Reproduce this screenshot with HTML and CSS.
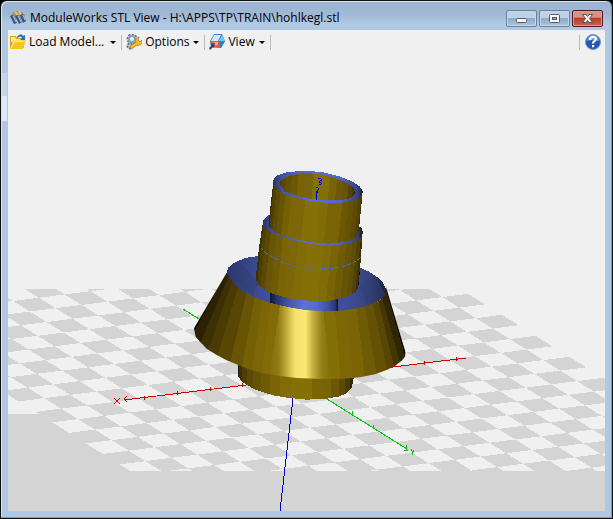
FILE: index.html
```html
<!DOCTYPE html>
<html lang="en">
<head>
<meta charset="utf-8">
<title>ModuleWorks STL View</title>
<link rel="stylesheet" href="styles.css">
</head>
<body>
<div class="window">
  <header class="titlebar">
    <svg class="app-icon" viewBox="0 0 16 16" aria-hidden="true">
      <path d="M1 5l3-3 4-1 4 1 3 3-2 4H3z" fill="#9c9468"/>
      <path d="M5 2l3 3M9 1l2 4" stroke="#dcc878" stroke-width="2"/>
      <path d="M0 6l3-1 4 8-3 1zM5 6l3-1 4 7-3 2zM10 5l3-1 3 7-3 2z" fill="#365787"/>
      <path d="M3 6l3 6M8 6l3 6M13 5l2 5" stroke="#b8cce5"/>
    </svg>
    <h1 class="title">ModuleWorks STL View - H:\APPS\TP\TRAIN\hohlkegl.stl</h1>
    <div class="caption-buttons">
      <button class="caption" aria-label="Minimize"><svg viewBox="0 0 31 17"><rect x="10.500" y="8.500" width="10" height="4" rx="1" fill="#f6f6f6" stroke="#545c6c"/></svg></button>
      <button class="caption" aria-label="Maximize"><svg viewBox="0 0 31 17"><rect x="10.500" y="4.500" width="10" height="8" rx="1" fill="#f6f6f6" stroke="#545c6c"/><rect x="13.500" y="7.500" width="4" height="2" fill="#87a9cd" stroke="#545c6c"/></svg></button>
      <button class="caption close" aria-label="Close"><svg viewBox="0 0 31 17"><path d="M10.500 4.500h3.500l1.500 2 1.500-2h3.500l-3 4 3 4h-3.500l-1.500-2-1.500 2h-3.500l3-4z" fill="#fafafa" stroke="#5a4c5c"/></svg></button>
    </div>
  </header>
  <main class="client">
    <nav class="toolbar" aria-label="Tools">
      <button class="tool load">
        <svg viewBox="0 0 16 16" aria-hidden="true"><path d="M0 2h6l1 2h7v10H0z" fill="#d9a11a"/><path d="M1 3h4l1 2h7v3H1z" fill="#ffe992"/><path d="M7 3c2-3 5-3 6-1l2-1v5h-5l2-2c-1-2-3-1-5 0z" fill="#2d6ab8"/><path d="M0 15L3 7l13-1-3 9z" fill="#f8c51d"/><path d="M1 14l3-6 11-1" fill="none" stroke="#fff0a0"/></svg>
        <span>Load Model...</span><i class="arrow"></i>
      </button>
      <span class="sep"></span>
      <button class="tool options">
        <svg viewBox="0 0 16 16" aria-hidden="true"><circle cx="6" cy="5" r="4" fill="none" stroke="#61758f" stroke-width="3" stroke-dasharray="2 1"/><circle cx="6" cy="5" r="3" fill="#edf3fa" stroke="#8ba2bd" stroke-width="2"/><circle cx="4" cy="12" r="2.500" fill="#c8d8eb" stroke="#61758f" stroke-width="2" stroke-dasharray="2 1"/><path d="M5 15l-1-3 6-4c-1-3 1-5 3-5l-1 3 2 2 2-2c1 4-2 6-5 5z" fill="#f5be24" stroke="#b97910" stroke-width=".8"/></svg>
        <span>Options</span><i class="arrow"></i>
      </button>
      <span class="sep"></span>
      <button class="tool view">
        <svg viewBox="0 0 16 16" aria-hidden="true"><path d="M5 0h8l3 7-4 7-10-1-1-6z" fill="#2f86cf"/><path d="M5 1h7l-3 6H2z" fill="#c8e9ff"/><path d="M13 1l3 6-6 0z" fill="#7cc3f5"/><path d="M10 7h6l-4 7z" fill="#2c7fc9"/><path d="M1 7h9l1 7-8-1z" fill="#e85639"/><path d="M4 8h5v3l-4 1z" fill="#ff9f87"/><path d="M0 14l3-3-2-1 5-1-1 5-1-1-3 3z" fill="#28407f"/></svg>
        <span>View</span><i class="arrow"></i>
      </button>
      <span class="sep"></span>
      <span class="spacer"></span>
      <span class="sep"></span>
      <button class="tool help" aria-label="Help">
        <svg viewBox="0 0 16 16" aria-hidden="true"><circle cx="8" cy="8" r="7.500" fill="#2757b6" stroke="#7898cb"/><path d="M2 7a6 6 0 0 1 12 0q-6-2-12 0" fill="#6f9be2"/><path d="M5 6c0-4 6-4 6-1 0 2-3 2-3 4.500" fill="none" stroke="#fff" stroke-width="2.200"/><rect x="7" y="11" width="2.200" height="2.200" fill="#fff"/></svg>
      </button>
    </nav>
    <svg class="viewport" viewBox="8 54 597 457" preserveAspectRatio="xMidYMid slice" role="img" aria-label="3D model on a checkered floor">
      <defs>
        <clipPath id="floor-clip"><rect x="8" y="289" width="597" height="182"/></clipPath>
        <clipPath id="cone-clip"><path d="M140 68L150 85 165 105 190 125 220 140 260 155 300 165 340 174 380 180 430 183 475 183 520 176 560 168 595 153 620 135 618 110 677 308 675 320 665 332 645 347 620 360 585 373 540 382 490 386 430 387 350 384 300 378 250 370 210 359 175 345 140 331 110 315 80 296 60 275 47 260 42 235z"/></clipPath>
        <linearGradient id="shine"><stop offset="0" stop-color="#836c07"/><stop offset=".16" stop-color="#927b15"/><stop offset=".3" stop-color="#c5ad3c"/><stop offset=".43" stop-color="#f7e16d"/><stop offset=".6" stop-color="#fce775"/><stop offset=".72" stop-color="#c8af3d"/><stop offset=".86" stop-color="#948017"/><stop offset="1" stop-color="#837008"/></linearGradient>
        <linearGradient id="neck"><stop offset="0" stop-color="#10162d"/><stop offset=".1" stop-color="#29356d"/><stop offset=".3" stop-color="#4658b0"/><stop offset=".5" stop-color="#5b70dc"/><stop offset=".68" stop-color="#556ad0"/><stop offset=".85" stop-color="#4051a2"/><stop offset=".96" stop-color="#29356d"/><stop offset="1" stop-color="#080b16"/></linearGradient>
        <linearGradient id="ring"><stop offset="0" stop-color="#293466"/><stop offset=".1" stop-color="#364381"/><stop offset=".25" stop-color="#404f9c"/><stop offset=".75" stop-color="#404e99"/><stop offset=".9" stop-color="#344178"/><stop offset="1" stop-color="#181f3c"/></linearGradient>
        <linearGradient id="rim"><stop offset="0" stop-color="#2a3466"/><stop offset=".1" stop-color="#4252a2"/><stop offset=".45" stop-color="#596edb"/><stop offset=".75" stop-color="#5365c8"/><stop offset=".95" stop-color="#35427d"/><stop offset="1" stop-color="#111630"/></linearGradient>
        <linearGradient id="tube" gradientUnits="userSpaceOnUse" x1="282" x2="564" y1="0" y2="0" gradientTransform="skewX(-6)"></linearGradient>
        <linearGradient id="sleeve" gradientUnits="userSpaceOnUse" x1="262" x2="576" y1="0" y2="0" gradientTransform="skewX(-6)"></linearGradient>
        <linearGradient id="bore" gradientUnits="userSpaceOnUse" x1="302" x2="536" y1="0" y2="0" gradientTransform="skewX(-6)"></linearGradient>
        <linearGradient id="foot" gradientUnits="userSpaceOnUse" x1="175" x2="521" y1="0" y2="0"></linearGradient>
      </defs>
      <g shape-rendering="crispEdges">
        <rect x="-400" y="-200" width="1400" height="1200" fill="#f0f0f0"/>
        <path d="M-400 414H40L137 471H592L605 457H1000V1000H-400z" fill="#d4d4d4"/>
        <g clip-path="url(#floor-clip)"><path id="board" fill="#f0f0f0"/><path id="tiles" fill="#d4d4d4"/></g>
        <path d="M124 400L466 358" stroke="#c80000"/>
        <path d="M114 398l6 6m0-6l-6 6M127 396l-3 3 3 3M144 396v4M177 391v4M210 387v4M242 383v4M424 361v4M456 357v4" stroke="#c80000" fill="none"/>
        <path d="M183 309L407 449" stroke="#00c800"/>
        <path d="M352 411v4M373 425v4M406 445v5m2 0h-4M411 449l1 2v4M413 450v2" stroke="#00c800" fill="none"/>
        <path d="M293 398L280 511" stroke="#0000c8"/>
        <g transform="translate(180 250) scale(.33333)">
          <path d="M175 340V380L185 394 200 405 225 418 250 427 285 437 320 443 380 449 440 446 475 440 495 432 515 415 521 385V340z" fill="url(#foot)"/>
          <path d="M140 70L145 53 158 41 175 32 200 23 235 18 400 0 540 53 565 64 590 80 610 100 620 120V138L560 172 475 188 360 183 220 146 160 112z" fill="url(#ring)"/>
          <path d="M140 68L175 32 235 95 220 140zM620 138L580 75 540 105 560 168z" fill="#303d72" opacity=".5"/>
          <g clip-path="url(#cone-clip)" id="cone"></g>
          <path d="M270 125V158L300 166 340 174 380 180 430 183H475V145z" fill="url(#neck)"/>
        </g>
        <g transform="translate(180 160) scale(.33333)">
          <path d="M250 180L237 262 227 359 235 374 250 387 280 402 330 416 400 423 450 422 500 410 525 397 535 382 540 330 543 290 548 215 542 202 267 175z" fill="url(#sleeve)"/>
          <path d="M267 164L253 179 249 190 252 200 264 211 280 221 315 234 360 246 415 255 455 257 500 252 530 242 545 230 548 215 544 203 535 198 525 236 480 245 400 245 290 218z" fill="url(#rim)"/>
          <path d="M242 264Q268 292 322 312T428 326Q511 324 543 291" fill="none" stroke="#5266cb" stroke-width="3" stroke-dasharray="9 5 16 7"/>
          <path d="M280 65L267 178V200L282 216 315 229 360 241 410 249 450 251 495 246 528 233 536 217 548 96z" fill="url(#tube)"/>
          <path d="M279 65L281 57 292 46 315 38 350 34 390 33 435 38 475 48 515 64 539 79 548 93 547 103 538 114 520 122 488 128 440 129 390 123 345 113 310 101 287 83z" fill="url(#rim)"/>
          <path d="M300 75L302 61 319 51 346 43 380 39 420 43 460 53 500 68 520 83 525 98 522 108 508 115 480 121 440 121 390 116 350 107 315 94z" fill="url(#bore)"/>
          <path d="M409 120V92M409 84h6v7h-3v8M415 57l5-2 5 5-8 6 7 3-2 5h-6" fill="none" stroke="#0000c8" stroke-width="3"/>
        </g>
      </g>
    </svg>
  </main>
</div>
<script src="scene.js"></script>
</body>
</html>
```
FILE: styles.css
```css
* { box-sizing: border-box; }
body { margin: 0; background: #000; font-family: "Open Sans", "Noto Sans", sans-serif; font-size: 12px; color: #000; }
button { padding: 0; border: 0; background: none; font: inherit; color: inherit; }
.window {
  display: flex; flex-direction: column; height: 100vh; padding: 0 7px 7px 7px;
  border: 1px solid #101010; border-radius: 7px 7px 0 0;
  background: linear-gradient(#c3d5ea, #c3d5ea) 0 72px / 6px 23px no-repeat,
    linear-gradient(#dce8f3, #dce8f3) 0 95px / 6px 25px no-repeat,
    linear-gradient(#9ab3d0, #a0b9d6 14px, #b1c8e2 22px, #b1c8e2);
  box-shadow: inset -1px -1px #30bfd0, inset 1px 1px #dae5f0;
}
.titlebar { display: flex; flex: 0 0 29px; align-items: center; padding: 5px 2px 0 2px; }
.app-icon { width: 16px; height: 16px; flex: none; margin-right: 4px; }
.title { flex: 1; margin: 0; font-size: 12px; line-height: 16px; font-weight: 400; white-space: nowrap; overflow: hidden; }
.caption-buttons { display: flex; gap: 2px; }
.caption {
  width: 31px; height: 17px; border: 1px solid #66809e; border-radius: 2px;
  background: linear-gradient(#bfd1e6 0 45%, #8fabc9 50%, #a9c4df);
  box-shadow: inset 0 0 0 1px #c7d8e9;
}
.caption svg { display: block; width: 31px; height: 17px; margin: -1px; }
.close { border-color: #521523; background: linear-gradient(#d69488 0 40%, #b83d28 50%, #ca654b); box-shadow: inset 0 0 0 1px #df9d8e; }
.client { display: flex; flex: 1; flex-direction: column; min-height: 0; background: #f0f0f0; }
.toolbar { display: flex; flex: 0 0 24px; align-items: center; padding: 0 4px 0 2px; }
.tool { display: flex; align-items: center; height: 24px; line-height: 16px; white-space: nowrap; }
.tool svg { width: 16px; height: 16px; margin-right: 3px; flex: none; }
.help .arrow, .help svg { margin: 0; }
.arrow { margin: 1px 5px 0 4px; border: 3px solid transparent; border-top-color: #000; border-bottom: 0; }
.load .arrow { margin-left: 6px; }
.sep { width: 1px; height: 15px; margin-right: 4px; background: #bcbcbc; }
.spacer { flex: 1; }
.help { margin-left: 1px; }
.viewport { display: block; flex: 1; width: 100%; min-height: 0; }
```
FILE: scene.js
```js
const NS = "http://www.w3.org/2000/svg";

// Floor: square cells projected along two axes.
const origin = [442.3, 297.1], u = [25.85, -3.28], v = [16.85, 10.5];
const project = (i, j) => [0, 1].map(k => (origin[k] + i * u[k] + j * v[k]).toFixed(2)).join(" ");
const quad = (i0, j0, i1, j1) =>
  `M${project(i0, j0)}L${project(i1, j0)}L${project(i1, j1)}L${project(i0, j1)}z`;
let cells = "";
for (let i = -19; i <= 0; i++)
  for (let j = -8; j < 26; j++)
    if ((i + j) % 2 === 0) cells += quad(i, j, i + 1, j + 1);
document.getElementById("tiles").setAttribute("d", cells);
document.getElementById("board").setAttribute("d", quad(-19, -8, 1, 26));

// Flat shaded facets of the cylinders.
const shades = {
  tube: ["#110d02", "#3b3003", "#4e4004", "#5c4a05", "#685405", "#746005", "#7c6606", "#7c6606", "#857008", "#857008", "#826c07", "#7a6506", "#7a6506", "#6c5705", "#665205", "#5c4a05", "#504104", "#3b3003", "#0a0801"],
  sleeve: ["#201903", "#3b3003", "#4e4004", "#5a4905", "#685405", "#705b05", "#7a6506", "#7c6606", "#826c07", "#857008", "#857008", "#806b06", "#786305", "#705b05", "#665305", "#5f4d05", "#504104", "#3b3003", "#0a0801"],
  bore: ["#2b2204", "#4b3d04", "#594704", "#645005", "#6c5705", "#786305", "#786305", "#847006", "#847006", "#786305", "#6c5705", "#685305", "#544304", "#443604", "#241c02"],
  foot: ["#241c02", "#3b3003", "#4c3e04", "#5b4905", "#665205", "#705b05", "#7a6506", "#826c07", "#857008", "#857008", "#7a6506", "#786305", "#6b5705", "#5d4b05", "#4a3b04", "#332903", "#110d02"]
};
for (const [id, colors] of Object.entries(shades)) {
  const gradient = document.getElementById(id);
  colors.forEach((color, n) => {
    // Facets near the silhouette are seen edge on and look narrower.
    for (const edge of [n, n + 1]) {
      const stop = document.createElementNS(NS, "stop");
      stop.setAttribute("offset", (1 - Math.cos(Math.PI * edge / colors.length)) / 2);
      stop.setAttribute("stop-color", color);
      gradient.append(stop);
    }
  });
}

// Cone facets: x,y at the top edge, x,y at the bottom edge, shade.
const facets = [
  [110, 50, 0, 250, "#0c0901"], [138, 68, 40, 250, "#2b2203"], [146, 80, 60, 280, "#3c3004"],
  [156, 95, 84, 302, "#4a3b04"], [175, 110, 112, 320, "#584605"], [200, 128, 150, 340, "#685405"],
  [225, 140, 185, 355, "#746005"], [248, 150, 215, 365, "#7c6606"], [272, 158, 245, 375, "#836c07"],
  [300, 165, 268, 380, "url(#shine)"], [430, 180, 450, 390, "#837008"], [465, 182, 482, 390, "#7d6705"],
  [500, 180, 520, 388, "#7a6406"], [530, 174, 555, 384, "#705b05"], [555, 168, 590, 375, "#645105"],
  [578, 160, 622, 362, "#574605"], [594, 150, 642, 350, "#453704"], [606, 142, 661, 340, "#302603"],
  [617, 115, 675, 318, "#0c0901"], [640, 100, 700, 320, "none"]
];
const cone = document.getElementById("cone");
for (let n = 0; n < facets.length - 1; n++) {
  const [ax, ay, bx, by, fill] = facets[n], [cx, cy, dx, dy] = facets[n + 1];
  const facet = document.createElementNS(NS, "polygon");
  // Extend past both rims; the clip path trims to the silhouette.
  const at = (x0, y0, x1, y1, y) => x0 + (x1 - x0) * (y - y0) / (y1 - y0);
  facet.setAttribute("points", [at(ax, ay, bx, by, 40), 40, at(cx, cy, dx, dy, 40), 40,
    at(cx, cy, dx, dy, 400), 400, at(ax, ay, bx, by, 400), 400].join(" "));
  facet.setAttribute("fill", fill);
  cone.append(facet);
}
```
